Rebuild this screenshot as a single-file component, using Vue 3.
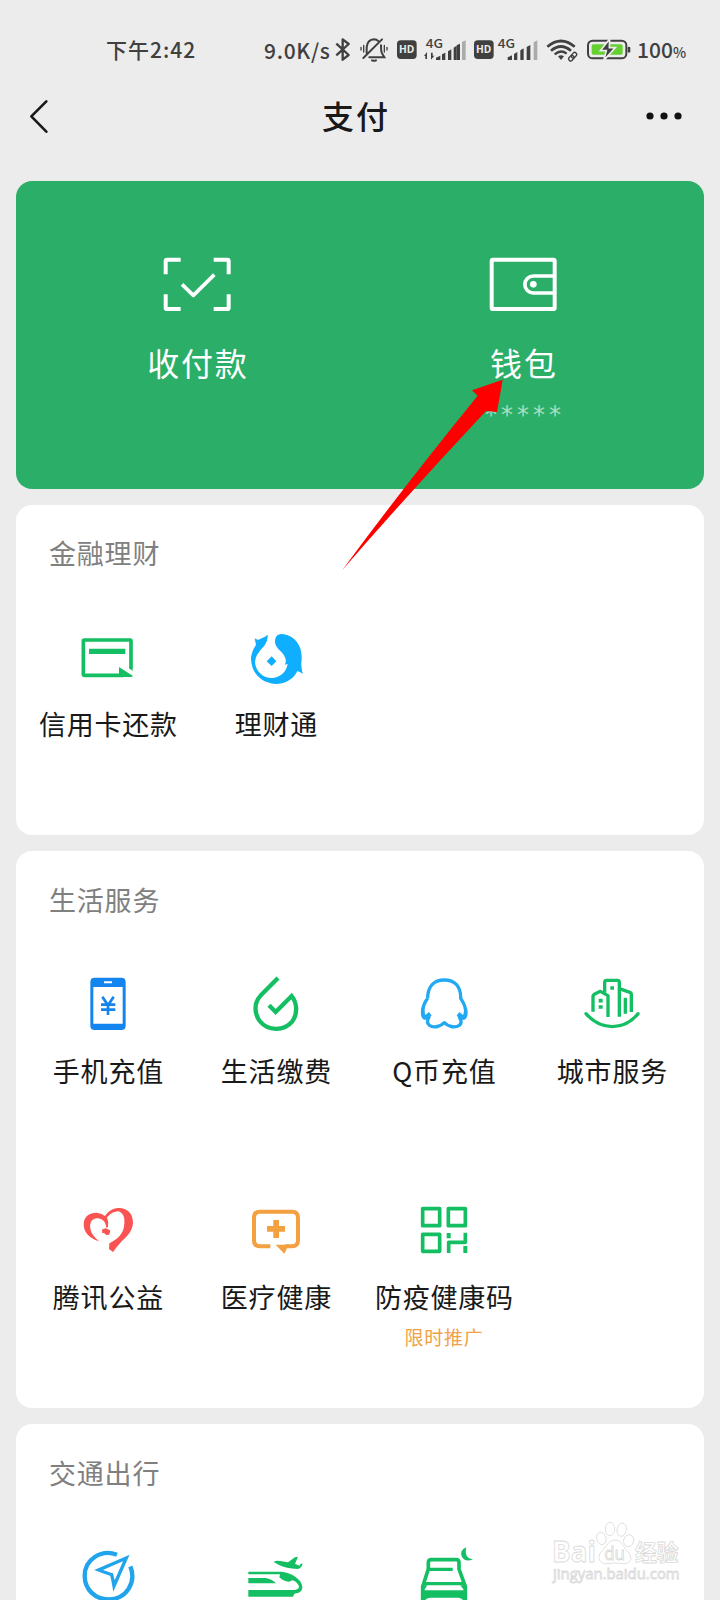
<script setup>
const finance = [
  { icon: 'card', label: '信用卡还款', box: '168 318 192 192' },
  { icon: 'fish', label: '理财通', box: '672 318 192 192' },
]
const life = [
  { icon: 'phone', label: '手机充值', box: '138 279 192 192' },
  { icon: 'drop', label: '生活缴费', box: '642 279 192 192' },
  { icon: 'penguin', label: 'Q币充值', box: '126 69 192 192' },
  { icon: 'city', label: '城市服务', box: '630 69 192 192' },
  { icon: 'heart', label: '腾讯公益', box: '138 57 192 192' },
  { icon: 'medical', label: '医疗健康', box: '642 57 192 192' },
  { icon: 'qr', label: '防疫健康码', note: '限时推广', box: '156 57 192 192' },
]
const travel = [
  { icon: 'nav', box: '168 315 192 192' },
  { icon: 'train', box: '672 315 192 192' },
  { icon: 'taxi', box: '66 135 192 192' },
]
const sections = [
  { title: '金融理财', cls: 'finance', items: finance },
  { title: '生活服务', cls: 'life', items: life },
  { title: '交通出行', cls: 'travel', items: travel },
]
</script>

<template>
  <div class="screen">
    <div class="status">
      <span class="time">下午2:42</span>
      <span class="speed">9.0K/s</span>
      <svg class="status-icons" viewBox="-45 30 900 90" fill="none" stroke="#404040">
        <path d="M-41 56 L-4 90 L-22 104 V43 L-4 57 L-41 91" stroke-width="7" stroke-linejoin="round" />
        <g stroke-width="6" stroke-linecap="round">
          <path d="M50 84 V67 Q52 44 72 43 Q80 43 86 49 M93 61 Q93 80 96 85 L103 97 H58 M40 99 L96 43" />
          <path d="M33 67 V75 M41 61 V81 M103 61 V81 M111 67 V75" stroke-width="4" />
          <path d="M66 106 Q72 109 78 106" />
        </g>
        <g fill="#404040" stroke="none">
          <rect x="141" y="46" width="59" height="56" rx="11" />
          <rect x="372" y="46" width="59" height="56" rx="11" />
          <text x="147" y="85" class="hd" textLength="46" lengthAdjust="spacingAndGlyphs">HD</text>
          <text x="378" y="85" class="hd" textLength="46" lengthAdjust="spacingAndGlyphs">HD</text>
          <text x="227" y="69" class="g4" textLength="52" lengthAdjust="spacingAndGlyphs">4G</text>
          <text x="443" y="69" class="g4" textLength="52" lengthAdjust="spacingAndGlyphs">4G</text>
          <path d="M222 93 L231 81 V102 H226 V93Z M253 92 L243 104 V83 H248 V92Z" />
          <path d="M258 105 V98 L271 92 V105Z M276 105 V88 L286 83 V105Z M294 105 V79 L304 73 V105Z M311 105 V68 L320 62 V105Z" />
          <path d="M320 61 L330 56 V105 H320Z" />
          <path d="M336 105 V51 L347 46 V105Z" fill="#ababab" />
          <path d="M473 105 V97 L486 91 V105Z M492 105 V87 L502 81 V105Z M511 105 V76 L521 70 V105Z M530 105 V66 L541 60 V105Z" />
          <path d="M551 105 V52 L562 46 V105Z" fill="#ababab" />
          <path d="M624 94 Q633 87 642 94 L633 105Z" />
        </g>
        <path d="M592 65 Q633 31 674 65" stroke-width="8" />
        <path d="M603 77 Q633 52 663 77" stroke-width="8" />
        <path d="M614 88 Q633 72 650 86" stroke-width="7" />
        <g stroke-width="4" transform="rotate(-48 668 95)">
          <rect x="653" y="89" width="18" height="12" rx="6" />
          <rect x="665" y="89" width="18" height="12" rx="6" />
        </g>
        <rect x="714" y="47" width="115" height="53" rx="14" stroke-width="6" />
        <rect x="725" y="58" width="93" height="31" rx="5" fill="#65d031" stroke="none" />
        <path d="M837 69 V79" stroke-width="8" stroke-linecap="round" />
        <path d="M779 42 L751 77 H769 L761 107 L796 68 H778Z" fill="#404040" stroke="#ececec" stroke-width="5" />
      </svg>
      <span class="battery">100<small>%</small></span>
    </div>

    <header class="nav">
      <svg class="back" viewBox="84 54 66 110">
        <path d="M139 64 L94 109 L139 155" fill="none" stroke="#1a1a1a" stroke-width="8" stroke-linecap="round" stroke-linejoin="round" />
      </svg>
      <h1>支付</h1>
      <svg class="more" viewBox="0 0 36 8"><circle cx="4" cy="4" r="3.6" /><circle cx="18" cy="4" r="3.6" /><circle cx="32" cy="4" r="3.6" /></svg>
    </header>

    <section class="hero">
      <div class="hero-item">
        <svg viewBox="128 81 206 165" fill="none" stroke="#fff" stroke-width="12">
          <path d="M136 133 V93 Q136 89 140 89 H181 M280 89 H321 Q325 89 325 93 V133 M325 193 V233 Q325 237 321 237 H280 M181 237 H140 Q136 237 136 233 V193" />
          <path d="M185 163 L219 196 L282 134" stroke-width="11" stroke-linejoin="round" />
        </svg>
        <span class="hero-label">收付款</span>
      </div>
      <div class="hero-item">
        <svg viewBox="476 81 206 165" fill="none" stroke="#fff" stroke-width="12">
          <rect x="484" y="89" width="189" height="148" rx="4" />
          <path d="M673 138 H609 A25 25 0 0 0 609 189 H673" stroke-width="11" />
          <circle cx="609" cy="163" r="10" fill="#fff" stroke="none" />
        </svg>
        <span class="hero-label">钱包</span>
        <span class="stars">*****</span>
      </div>
    </section>

    <section v-for="s in sections" :key="s.title" class="card" :class="s.cls">
      <h2>{{ s.title }}</h2>
      <div class="grid">
        <div v-for="it in s.items" :key="it.icon" class="cell">
          <svg class="icon" :viewBox="it.box" fill="none">
            <g v-if="it.icon === 'card'">
              <path d="M333 444 V363 Q333 360 331 360 H193 Q190 360 190 363 V463 Q190 466 193 466 H310" stroke="#14be62" stroke-width="11" />
              <path d="M207 386 H316 V402 H207Z M297 441 L339 468 Q337 471 332 471 H297Z M328 440 H338 V452 L328 446Z" fill="#14be62" />
            </g>
            <g v-else-if="it.icon === 'fish'" fill="#10aeff">
              <path d="M704 355 Q714 363 725 355 Q736 350 743 344 Q745 361 733 377 Q705 405 705 426 C707 457 731 474 755 474 C781 473 798 457 803 432 L794 434 C801 423 797 411 785 397 C767 380 760 369 768 351 Q775 340 792 343 C829 350 850 382 844 428 Q843 439 848 462 Q838 453 832 454 C819 480 794 492 766 492 C724 489 695 461 693 417 Q693 397 708 374Z" />
              <path d="M755 409 L769 424 L755 438 L740 424Z" />
            </g>
            <g v-else-if="it.icon === 'phone'">
              <path fill="#1485ee" fill-rule="evenodd" d="M194 293 H274 Q287 293 287 306 V437 Q287 450 274 450 H194 Q181 450 181 437 V306 Q181 293 194 293Z M190 321 V431 H278 V321Z" />
              <path d="M222 307 H246" stroke="#fff" stroke-width="6" />
              <path d="M217 350 L234 376 L251 350 M234 374 V405 M213 374 H256 M213 389 H256" stroke="#1485ee" stroke-width="8" />
            </g>
            <g v-else-if="it.icon === 'drop'" stroke="#14be62" stroke-width="13">
              <path d="M744 294 L694 344 C671 367 672 400 689 423 C714 454 762 454 787 424 C803 402 802 370 785 348 L737 396 L717 376" />
            </g>
            <g v-else-if="it.icon === 'penguin'" stroke="#22a9f3" stroke-linejoin="round">
              <path d="M173 145 C173 109 192 90 223 90 C254 90 273 109 272 145 C283 161 290 181 287 197 C283 212 270 202 264 193 M173 145 C161 161 156 177 158 195 C162 211 173 204 181 193" stroke-width="10" />
              <path d="M178 200 Q167 217 178 226 C192 235 213 229 223 218 C233 229 254 235 268 226 Q279 217 267 200" stroke-width="10" />
              <path d="M159 175 Q157 194 165 202 L180 190 M286 175 Q289 194 280 202 L265 190" stroke-width="10" />
            </g>
            <g v-else-if="it.icon === 'city'" stroke="#14be62" stroke-width="10" stroke-linejoin="round">
              <path d="M669 185 V139 Q669 135 673 133 L691 124 L714 137 V201" />
              <path d="M704 128 V97 Q704 91 710 91 H742 Q748 91 748 97 V200" />
              <path d="M748 116 L780 127 Q784 129 784 133 V186 M766 143 V191" />
              <path d="M648 191 Q681 229 727 230 Q774 229 804 191" stroke-linecap="round" />
              <path d="M721 114 H732 M686 152 H698 M686 171 H698" stroke-width="11" />
            </g>
            <g v-else-if="it.icon === 'heart'" fill="#fa5452">
              <path d="M208 184 C180 176 161 159 161 132 C162 108 179 98 199 98 Q214 99 225 108 C238 89 254 84 270 84 C295 86 309 103 309 128 C308 151 294 166 275 184 Q260 201 249 216 L237 207 L238 190 C258 180 276 166 281 145 C286 122 284 100 266 94 Q246 94 231 112 Q237 127 234 142 L229 143 C228 124 214 113 199 115 C184 118 178 130 181 145 C184 163 194 173 208 184Z" />
              <path d="M217 148 L227 145 L240 151 Q243 158 237 164 L229 165 Q224 158 216 158Z" />
            </g>
            <g v-else-if="it.icon === 'medical'">
              <path d="M721 199 H690 Q672 199 672 181 V113 Q672 95 690 95 H786 Q804 95 804 113 V181 Q804 199 786 199 H765" stroke="#f2a040" stroke-width="12" />
              <path d="M737 194 H776 L763 221Z M730 120 H747 V138 H765 V155 H747 V174 H730 V155 H711 V138 H730Z" fill="#f2a040" />
            </g>
            <g v-else-if="it.icon === 'qr'" stroke="#14be62" stroke-width="11" stroke-linejoin="round">
              <rect x="188" y="86" width="51" height="51" />
              <rect x="265" y="86" width="51" height="51" />
              <rect x="188" y="163" width="51" height="51" />
              <path d="M266 219 V187 H316 V158" />
              <path d="M266 159 V175 M316 198 V219" stroke-width="12" />
            </g>
            <g v-else-if="it.icon === 'nav'" stroke="#22a4ec">
              <path d="M291 344 C243 326 193 359 194 409 C195 449 226 478 265 478 C320 478 350 427 331 379" stroke-width="13" />
              <path d="M319 354 L236 390 Q271 403 275 404 Q279 420 282 438Z" stroke-width="10" />
            </g>
            <g v-else-if="it.icon === 'train'" fill="#14be62">
              <path d="M761 366 Q769 360 785 364 L804 367 L825 352 L834 350 L825 371 L838 377 L842 371 H848 Q845 384 832 387 Q798 385 777 375Z" />
              <path d="M685 395 H785 C815 398 846 419 847 440 Q847 453 836 458 L823 461 L819 470 H685 V450 H820 Q837 449 837 440 C834 430 825 422 817 421 Q801 432 778 412 L780 403 H685Z" />
              <path d="M685 414 H736 Q758 418 768 430 H685Z" />
            </g>
            <g v-else stroke="#14be62">
              <path d="M98 320 V260 L115 207 V188 Q115 179 124 179 H198 Q207 179 207 188 V207 L226 260 V320" stroke-width="11" />
              <path d="M118 208 H188 M100 251 H225" stroke-width="10" />
              <path d="M95 271 H230 V300 H219 Q215 294 205 293 H122 Q109 294 106 300 H95Z" fill="#14be62" stroke="none" />
              <path d="M95 256 H112 L101 272 H95Z M211 256 H229 V272 H224Z" fill="#14be62" stroke="none" />
              <path d="M229 142 Q207 151 216 171 Q227 188 249 178 Q221 175 229 142Z" fill="#14be62" stroke="none" />
            </g>
          </svg>
          <span v-if="it.label" class="label">{{ it.label }}</span>
          <span v-if="it.note" class="note">{{ it.note }}</span>
        </div>
      </div>
    </section>

    <svg class="arrow" viewBox="0 0 780 1050"><path d="M518 449 L426 481 L443 497 Q225 765 37 1020 Q250 775 468 543 L501 546Z" fill="#fe0000" /></svg>

    <svg class="watermark" viewBox="480 60 400 200" fill="#fff" stroke="#dadada" stroke-width="2.5">
      <text x="486" y="187" class="wm-big" textLength="132" lengthAdjust="spacingAndGlyphs">Bai</text>
      <ellipse cx="634" cy="115" rx="14" ry="19" transform="rotate(-15 634 115)" />
      <ellipse cx="660" cy="87" rx="14" ry="20" />
      <ellipse cx="695" cy="89" rx="14" ry="20" transform="rotate(10 695 89)" />
      <ellipse cx="716" cy="122" rx="15" ry="18" transform="rotate(15 716 122)" />
      <path d="M675 120 C656 120 651 139 637 151 C617 171 630 193 650 191 Q675 186 700 191 C724 193 731 171 712 153 C699 140 695 120 675 120Z" />
      <text x="643" y="181" class="wm-du" textLength="62" lengthAdjust="spacingAndGlyphs">du</text>
      <text x="735" y="184" class="wm-cn" textLength="131" lengthAdjust="spacingAndGlyphs">经验</text>
      <text x="489" y="238" class="wm-url" textLength="380" lengthAdjust="spacingAndGlyphs">jingyan.baidu.com</text>
    </svg>
  </div>
</template>

<style>
body { margin: 0; background: #ececec; }
</style>

<style scoped>
.screen {
  position: relative;
  width: 720px;
  height: 1600px;
  overflow: hidden;
  box-sizing: border-box;
  background: #ececec;
  color: #191919;
  font-family: "Noto Sans CJK SC", sans-serif;
}
.status {
  display: flex;
  align-items: center;
  height: 50px;
  padding-top: 25px;
  color: #404040;
  font-size: 21px;
  font-weight: 500;
  line-height: 46px;
  white-space: nowrap;
}
.time { width: 158px; margin: -2px 0 0 106px; letter-spacing: 1px; }
.speed { width: 71px; letter-spacing: 0.7px; }
.status-icons { width: 300px; height: 30px; flex: none; }
.hd { font: 700 29px "Open Sans", sans-serif; }
.status-icons .hd { fill: #ececec; }
.g4 { font: 500 35px "Noto Sans CJK SC", sans-serif; letter-spacing: 0; }
.battery { margin-left: 2px; font-size: 21px; }
.battery small { font-size: 14px; }
.nav {
  display: flex;
  align-items: center;
  justify-content: space-between;
  height: 82.5px;
  padding: 0 38px 0 28px;
}
.back { width: 22px; height: 36.7px; }
h1 { margin: -2px 0 0 16px; font-size: 32px; font-weight: 500; letter-spacing: 2px; line-height: 48px; }
.more { width: 36px; height: 8px; fill: #111; }
.hero {
  display: flex;
  height: 308px;
  margin: 23px 16px 0;
  padding: 0 18px;
  box-sizing: border-box;
  border-radius: 16px;
  background: #2bae67;
  color: #fff;
}
.hero-item { flex: 1; display: flex; flex-direction: column; align-items: center; padding-top: 76px; }
.hero-item svg { width: 68.7px; height: 55px; }
.hero-label { margin-top: 26px; font-size: 32px; line-height: 48px; letter-spacing: 1.8px; margin-right: -1.8px; }
.stars {
  margin: 13px -4px 0 0;
  font: 24px/32px "DejaVu Sans", sans-serif;
  letter-spacing: 4px;
  color: rgba(255, 255, 255, 0.6);
}
.card { margin: 16px 16px 0; padding: 0 8px; border-radius: 16px; background: #fff; overflow: hidden; }
.finance { height: 330.5px; }
.life { height: 557px; }
.travel { height: 400px; }
h2 { margin: 28px 0 0 25px; font-size: 27px; font-weight: 400; line-height: 40px; letter-spacing: 0.8px; color: #808080; }
.grid { display: grid; grid-template-columns: repeat(4, 168px); grid-auto-rows: 226px; margin-top: 53px; }
.life h2, .travel h2 { margin-top: 29px; }
.travel .grid { margin-top: 51.5px; }
.cell { display: flex; flex-direction: column; align-items: center; }
.icon { width: 64px; height: 64px; flex: none; }
.label { margin: 14px -0.8px 0 0; font-size: 27px; line-height: 40px; letter-spacing: 0.8px; white-space: nowrap; }
.note { margin-top: 6px; font-size: 19px; line-height: 28px; letter-spacing: 0.8px; color: #f0a248; }
.arrow { position: absolute; left: 330px; top: 230px; width: 260px; height: 350px; }
.watermark { position: absolute; left: 550px; top: 1520px; width: 133.3px; height: 66.7px; }
.wm-big { font: 700 86px "Open Sans", sans-serif; }
.wm-du { font: 400 54px "Open Sans", sans-serif; }
.wm-cn { font: 700 68px "Noto Sans CJK SC", sans-serif; }
.wm-url { font: 400 44px "Open Sans", sans-serif; }
</style>
